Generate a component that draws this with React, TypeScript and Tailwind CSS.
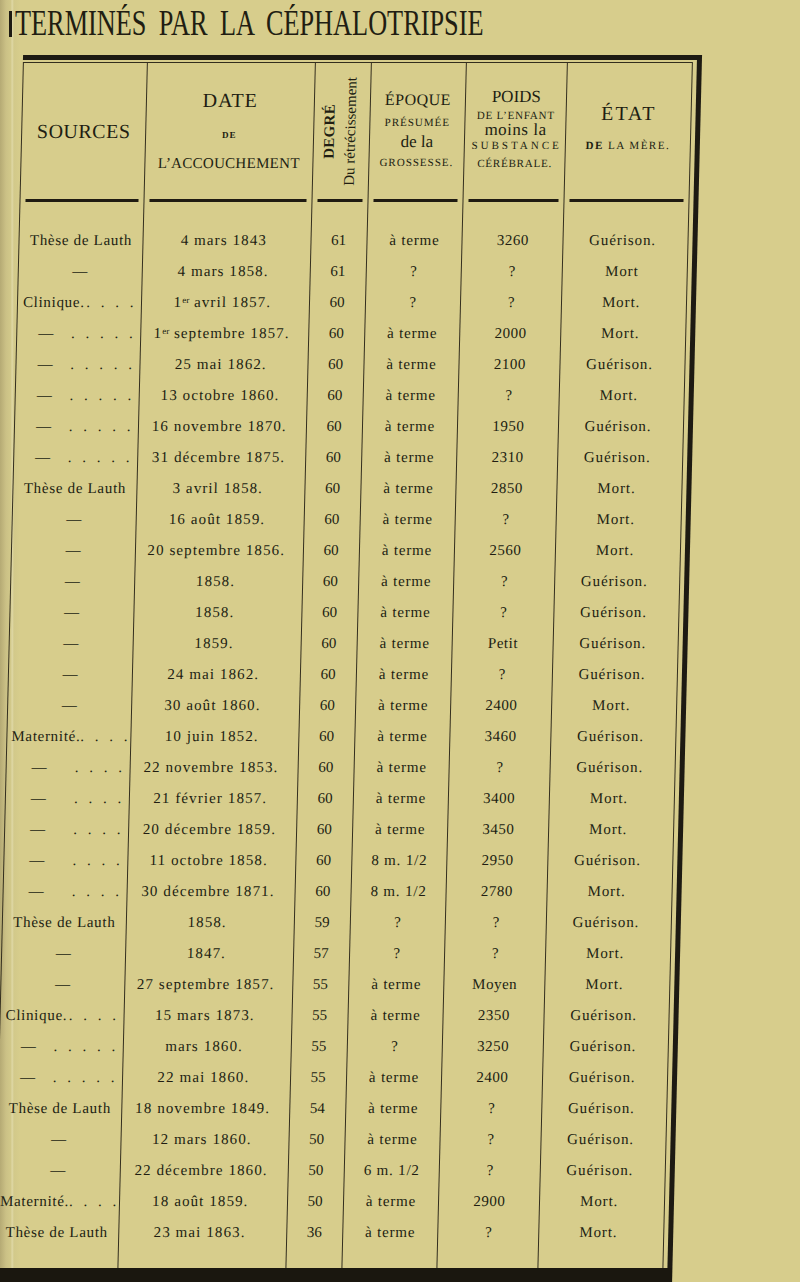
import React from 'react';

// Tableau : accouchements terminés par la céphalotripsie (page scannée)

type Src = 'T' | '-' | 'C' | 'c' | 'M' | 'm';
type Row = [Src, string, string, string, string, string];

const ROWS: Row[] = [
  ['T', '4 mars 1843', '61', 'à terme', '3260', 'Guérison.'],
  ['-', '4 mars 1858.', '61', '?', '?', 'Mort'],
  ['C', '1er avril 1857.', '60', '?', '?', 'Mort.'],
  ['c', '1er septembre 1857.', '60', 'à terme', '2000', 'Mort.'],
  ['c', '25 mai 1862.', '60', 'à terme', '2100', 'Guérison.'],
  ['c', '13 octobre 1860.', '60', 'à terme', '?', 'Mort.'],
  ['c', '16 novembre 1870.', '60', 'à terme', '1950', 'Guérison.'],
  ['c', '31 décembre 1875.', '60', 'à terme', '2310', 'Guérison.'],
  ['T', '3 avril 1858.', '60', 'à terme', '2850', 'Mort.'],
  ['-', '16 août 1859.', '60', 'à terme', '?', 'Mort.'],
  ['-', '20 septembre 1856.', '60', 'à terme', '2560', 'Mort.'],
  ['-', '1858.', '60', 'à terme', '?', 'Guérison.'],
  ['-', '1858.', '60', 'à terme', '?', 'Guérison.'],
  ['-', '1859.', '60', 'à terme', 'Petit', 'Guérison.'],
  ['-', '24 mai 1862.', '60', 'à terme', '?', 'Guérison.'],
  ['-', '30 août 1860.', '60', 'à terme', '2400', 'Mort.'],
  ['M', '10 juin 1852.', '60', 'à terme', '3460', 'Guérison.'],
  ['m', '22 novembre 1853.', '60', 'à terme', '?', 'Guérison.'],
  ['m', '21 février 1857.', '60', 'à terme', '3400', 'Mort.'],
  ['m', '20 décembre 1859.', '60', 'à terme', '3450', 'Mort.'],
  ['m', '11 octobre 1858.', '60', '8 m. 1/2', '2950', 'Guérison.'],
  ['m', '30 décembre 1871.', '60', '8 m. 1/2', '2780', 'Mort.'],
  ['T', '1858.', '59', '?', '?', 'Guérison.'],
  ['-', '1847.', '57', '?', '?', 'Mort.'],
  ['-', '27 septembre 1857.', '55', 'à terme', 'Moyen', 'Mort.'],
  ['C', '15 mars 1873.', '55', 'à terme', '2350', 'Guérison.'],
  ['c', 'mars 1860.', '55', '?', '3250', 'Guérison.'],
  ['c', '22 mai 1860.', '55', 'à terme', '2400', 'Guérison.'],
  ['T', '18 novembre 1849.', '54', 'à terme', '?', 'Guérison.'],
  ['-', '12 mars 1860.', '50', 'à terme', '?', 'Guérison.'],
  ['-', '22 décembre 1860.', '50', '6 m. 1/2', '?', 'Guérison.'],
  ['M', '18 août 1859.', '50', 'à terme', '2900', 'Mort.'],
  ['T', '23 mai 1863.', '36', 'à terme', '?', 'Mort.'],
];

function Dots({ n }: { n: number }) {
  return <span className="tracking-[3.5px]">{Array(n).fill('.').join(' ')}</span>;
}

function SourceCell({ kind }: { kind: Src }) {
  if (kind === 'T') return <div className="text-center">Thèse de Lauth</div>;
  if (kind === '-') return <div className="text-center">—</div>;
  if (kind === 'C')
    return (
      <div className="flex justify-between pl-[5px] pr-[4px]">
        <span>Clinique.</span>
        <Dots n={4} />
      </div>
    );
  if (kind === 'c')
    return (
      <div className="flex justify-between pl-[21px] pr-[4px]">
        <span>—</span>
        <Dots n={5} />
      </div>
    );
  if (kind === 'M')
    return (
      <div className="flex justify-between pl-[4px] pr-[4px]">
        <span>Maternité.</span>
        <Dots n={4} />
      </div>
    );
  return (
    <div className="flex justify-between pl-[25px] pr-[4px]">
      <span>—</span>
      <Dots n={4} />
    </div>
  );
}

function DateText({ v }: { v: string }) {
  if (v.startsWith('1er ')) {
    return (
      <span>
        1<sup className="text-[9px] tracking-normal">er</sup> {v.slice(4)}
      </span>
    );
  }
  return <span>{v}</span>;
}

function Column({
  width,
  header,
  cells,
  cellClass,
}: {
  width: string;
  header: React.ReactNode;
  cells: React.ReactNode[];
  cellClass: string;
}) {
  return (
    <div className={`${width} flex flex-col border-r border-[#332e1e]`}>
      {/* en-tête */}
      <div className="h-[140px] flex flex-col">
        <div className="flex-1 relative">{header}</div>
        <div className="mx-[5px] mb-[1px] h-[3px] bg-[#1f1b12]" />
      </div>
      {/* lignes */}
      <div className="flex flex-col pt-[22px] pb-[20px]">
        {cells.map((c, i) => (
          <div key={i} className={`h-[31px] leading-[31px] whitespace-nowrap ${cellClass}`}>
            {c}
          </div>
        ))}
      </div>
    </div>
  );
}

export default function App() {
  return (
    <div className="w-[800px] h-[1282px] overflow-hidden bg-[#d7cd8c] bg-[linear-gradient(to_right,#b5aa74_0px,#cbc186_6px,#d2c98a_11px,#e0d9a8_12px,#d2c98a_14px,#d7cd8c_20px)] text-[#211d12] [font-family:Liberation_Serif,DejaVu_Serif,serif]">
      {/* titre */}
      <div className="h-[55px] flex items-start pt-[5px] pl-[9px]">
        <span className="mt-[6px] w-[3px] h-[26px] bg-[#1d1a12]" />
        <h1 className="ml-[3px] text-[36px] leading-[36px] font-normal whitespace-nowrap origin-left scale-x-[0.73] [word-spacing:8px]">
          TERMINÉS PAR LA CÉPHALOTRIPSIE
        </h1>
      </div>

      {/* tableau */}
      <div className="ml-[8px] w-[679px] flex flex-col skew-x-[-1.4deg]">
        <div className="h-[5px] bg-[#1d1a12]" />
        <div className="flex">
          <div className="w-[670px] flex flex-col">
            <div className="h-[2px]" />
            <div className="h-[1px] bg-[#332e1e]" />
            <div className="flex border-l border-[#332e1e] text-[15px]">
              <Column
                width="w-[124px]"
                cellClass="tracking-[0.7px]"
                header={
                  <div className="h-full flex items-center justify-center text-[20px] tracking-[0.5px]">
                    SOURCES
                  </div>
                }
                cells={ROWS.map((r, i) => <SourceCell key={i} kind={r[0]} />)}
              />
              <Column
                width="w-[168px]"
                cellClass="text-center tracking-[1.1px] pr-[6px]"
                header={
                  <div className="flex flex-col items-center pt-[27px]">
                    <span className="text-[20px] leading-[20px] tracking-[1px]">DATE</span>
                    <span className="mt-[20px] text-[9px] leading-[10px] font-bold tracking-[1px]">DE</span>
                    <span className="mt-[15px] text-[15px] leading-[16px] tracking-[0.3px]">L’ACCOUCHEMENT</span>
                  </div>
                }
                cells={ROWS.map((r, i) => <DateText key={i} v={r[1]} />)}
              />
              <Column
                width="w-[56px]"
                cellClass="text-center"
                header={
                  <div className="h-full flex items-center justify-center gap-[7px] pr-[2px]">
                    <span className="[writing-mode:vertical-rl] rotate-180 text-[15px] leading-[13px] font-bold tracking-[0.3px]">
                      DEGRÉ
                    </span>
                    <span className="[writing-mode:vertical-rl] rotate-180 text-[15px] leading-[15px]">
                      Du rétrécissement
                    </span>
                  </div>
                }
                cells={ROWS.map((r) => r[2])}
              />
              <Column
                width="w-[96px]"
                cellClass="text-center tracking-[0.8px]"
                header={
                  <div className="flex flex-col items-center pt-[28px] whitespace-nowrap">
                    <span className="text-[16px] leading-[18px] tracking-[0.5px]">ÉPOQUE</span>
                    <span className="mt-[7px] text-[11px] leading-[12px] tracking-[1px]">PRÉSUMÉE</span>
                    <span className="mt-[5px] text-[17px] leading-[18px]">de la</span>
                    <span className="mt-[5px] text-[11px] leading-[12px] tracking-[1px]">GROSSESSE.</span>
                  </div>
                }
                cells={ROWS.map((r) => r[3])}
              />
              <Column
                width="w-[101px]"
                cellClass="text-center tracking-[0.5px]"
                header={
                  <div className="flex flex-col items-center pt-[25px] whitespace-nowrap">
                    <span className="text-[17px] leading-[18px]">POIDS</span>
                    <span className="mt-[3px] text-[11px] leading-[12px] tracking-[0.8px]">DE L’ENFANT</span>
                    <span className="mt-[1px] text-[17px] leading-[16px] tracking-[0.5px]">moins la</span>
                    <span className="mt-[1px] text-[11px] leading-[12px] tracking-[3px] pl-[3px]">SUBSTANCE</span>
                    <span className="mt-[6px] text-[11px] leading-[12px] tracking-[0.8px]">CÉRÉBRALE.</span>
                  </div>
                }
                cells={ROWS.map((r) => r[4])}
              />
              <Column
                width="w-[125px]"
                cellClass="text-center tracking-[0.9px] pr-[6px]"
                header={
                  <div className="flex flex-col items-center pt-[40px] whitespace-nowrap">
                    <span className="text-[20px] leading-[20px] tracking-[2px]">ÉTAT</span>
                    <span className="mt-[16px] text-[11px] leading-[12px] tracking-[1.5px]">
                      <span className="font-bold">DE</span> LA MÈRE.
                    </span>
                  </div>
                }
                cells={ROWS.map((r) => r[5])}
              />
            </div>
          </div>
          <div className="w-[4px]" />
          <div className="w-[5px] bg-[#1d1a12]" />
        </div>
        <div className="h-[20px] bg-[#1a170f]" />
      </div>
    </div>
  );
}
